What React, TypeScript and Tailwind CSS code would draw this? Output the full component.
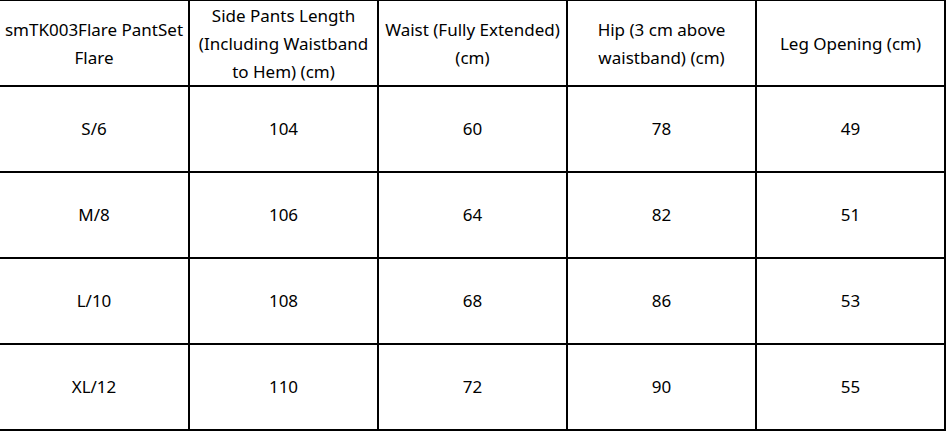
import React from "react";

const header: React.ReactNode[] = [
  <>smTK003Flare PantSet<br />Flare</>,
  <>Side Pants Length<br />(Including Waistband<br />to Hem) (cm)</>,
  <>Waist (Fully Extended)<br />(cm)</>,
  <>Hip (3 cm above<br />waistband) (cm)</>,
  <>Leg Opening (cm)</>,
];

const rows = [
  ["S/6", "104", "60", "78", "49"],
  ["M/8", "106", "64", "82", "51"],
  ["L/10", "108", "68", "86", "53"],
  ["XL/12", "110", "72", "90", "55"],
];

export default function App() {
  return (
    <div
      className="w-[946px] h-[431px] bg-white text-black overflow-hidden"
      style={{ fontFamily: '"Noto Sans", "Open Sans", sans-serif' }}
    >
      <div className="grid grid-cols-[190px_189px_189px_189px_189px] border-t border-black text-[17px] leading-[28px]">
        {header.map((h, i) => (
          <div
            key={`h${i}`}
            className="h-[86px] border-r-2 border-b-2 border-black flex items-center justify-center text-center whitespace-nowrap"
          >
            <div className="pt-[2px]">{h}</div>
          </div>
        ))}
        {rows.map((r, ri) =>
          r.map((c, ci) => (
            <div
              key={`${ri}-${ci}`}
              className="h-[86px] border-r-2 border-b-2 border-black flex items-center justify-center text-center"
            >
              <div>{c}</div>
            </div>
          ))
        )}
      </div>
    </div>
  );
}
